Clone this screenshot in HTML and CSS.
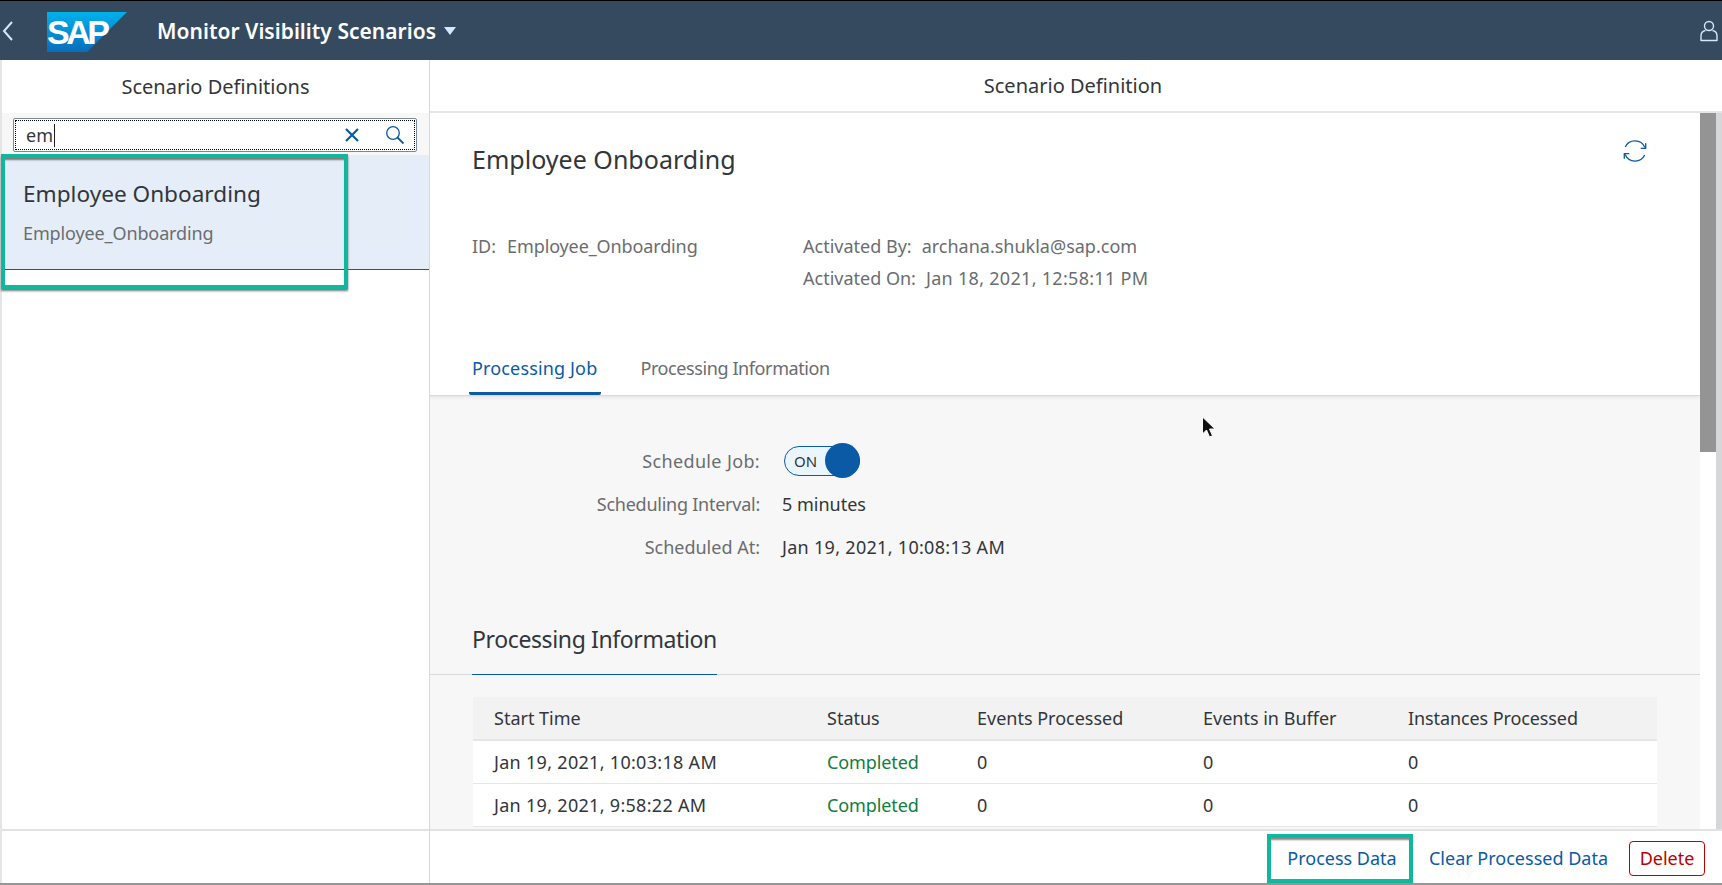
FILE: index.html
```
<!DOCTYPE html>
<html lang="en">
<head>
<meta charset="utf-8">
<title>Monitor Visibility Scenarios</title>
<link rel="stylesheet" href="styles.css">
</head>
<body>
<div class="app">
  <header class="shell">
    <svg class="back" viewBox="0 0 12 22" width="12" height="22"><path d="M10 2 2 11l8 9" fill="none" stroke="#d1e8ff" stroke-width="2"/></svg>
    <div class="logo">
      <svg viewBox="0 0 80 40" width="80" height="40">
        <defs><linearGradient id="sapg" x1="0" y1="0" x2="0" y2="1"><stop offset="0" stop-color="#00b1eb"/><stop offset="1" stop-color="#0a6cbd"/></linearGradient></defs>
        <polygon points="0,0 80,0 40,40 0,40" fill="url(#sapg)"/>
        <text x="0" y="32" class="logo-text">SAP</text>
      </svg>
    </div>
    <div class="app-title">Monitor Visibility Scenarios</div>
    <svg class="caret" viewBox="0 0 12 8" width="12" height="8"><polygon points="0,0 12,0 6,8" fill="#d1e8ff"/></svg>
    <svg class="user" viewBox="0 0 18 22" width="18" height="22"><circle cx="9" cy="6" r="4.5" fill="none" stroke="#d1e8ff" stroke-width="1.4"/><path d="M1 21v-5c0-3 2-5 4.500-5.500M17 21v-5c0-3-2-5-4.500-5.500M1 20.500h16" fill="none" stroke="#d1e8ff" stroke-width="1.400"/></svg>
  </header>
  <div class="main">
    <aside class="master">
      <div class="bar-title">Scenario Definitions</div>
      <div class="search-band">
        <div class="search">
          <span class="search-text">em</span><span class="text-cursor"></span>
          <svg class="x-icon" viewBox="0 0 16 16" width="16" height="16"><path d="M2 2l12 12M14 2 2 14" stroke="#0a5aa5" stroke-width="2.200" fill="none"/></svg>
          <svg class="search-icon" viewBox="0 0 20 20" width="20" height="20"><circle cx="8" cy="8" r="6.300" fill="none" stroke="#0a5aa5" stroke-width="1.300"/><path d="M12.500 12.500 18.500 18.500" stroke="#0a5aa5" stroke-width="1.800"/></svg>
        </div>
      </div>
      <div class="list">
        <div class="list-item">
          <div class="item-title">Employee Onboarding</div>
          <div class="item-sub">Employee_Onboarding</div>
        </div>
        <div class="highlight-item"></div>
      </div>
      <div class="master-footer"></div>
    </aside>
    <section class="detail">
      <div class="bar-title detail-title">Scenario Definition</div>
      <div class="scroll-wrap">
        <div class="scroll-content">
          <div class="object-head">
            <div class="head-row">
              <h1 class="object-title">Employee Onboarding</h1>
              <svg class="refresh" viewBox="0 0 24 24" width="24" height="24"><path d="M2.300 8A10.700 10.700 0 0 1 21.800 8.500M21.700 16A10.700 10.700 0 0 1 2.200 15.500" fill="none" stroke="#0a5aa5" stroke-width="1.300"/><path d="M22.700 4.300v5h-5M1.300 19.700v-5h5" fill="none" stroke="#0a5aa5" stroke-width="1.300"/></svg>
            </div>
            <div class="attrs">
              <div class="attr-col id-col"><span class="lbl lbl-id">ID:</span><span class="val val-id">Employee_Onboarding</span></div>
              <div class="attr-col">
                <div class="attr-line"><span class="lbl">Activated By:</span><span class="val">archana.shukla@sap.com</span></div>
                <div class="attr-line"><span class="lbl">Activated On:</span><span class="val date">Jan 18, 2021, 12:58:11 PM</span></div>
              </div>
            </div>
            <div class="tabs">
              <div class="tab active">Processing Job</div>
              <div class="tab tab-long">Processing Information</div>
            </div>
          </div>
          <div class="section-body">
            <div class="form">
              <div class="form-label lbl-job">Schedule Job:</div>
              <div class="form-value"><span class="switch"><span class="switch-text">ON</span><span class="knob"></span></span></div>
              <div class="form-label lbl-interval">Scheduling Interval:</div>
              <div class="form-value">5 minutes</div>
              <div class="form-label">Scheduled At:</div>
              <div class="form-value date">Jan 19, 2021, 10:08:13 AM</div>
            </div>
            <div class="section-head"><h2 class="section-title">Processing Information</h2></div>
            <div class="grid">
              <div class="grid-row grid-header"><span>Start Time</span><span>Status</span><span>Events Processed</span><span>Events in Buffer</span><span class="col-inst">Instances Processed</span></div>
              <div class="grid-row"><span class="date">Jan 19, 2021, 10:03:18 AM</span><span class="ok">Completed</span><span>0</span><span>0</span><span>0</span></div>
              <div class="grid-row"><span class="date">Jan 19, 2021, 9:58:22 AM</span><span class="ok">Completed</span><span>0</span><span>0</span><span>0</span></div>
            </div>
          </div>
        </div>
        <div class="scrollbar"><div class="thumb"></div></div>
        <svg class="pointer" viewBox="0 0 16 24" width="16" height="24"><path d="M1.500 1v17l4-4 3 7 3-1.300-3-6.700h5.500z" fill="#111" stroke="#fff" stroke-width="1"/></svg>
      </div>
      <div class="detail-footer">
        <button class="btn btn-highlight">Process Data</button>
        <button class="btn">Clear Processed Data</button>
        <button class="btn btn-delete">Delete</button>
      </div>
    </section>
  </div>
</div>
</body>
</html>
```
FILE: styles.css
```
* { box-sizing: border-box; }
html, body { margin: 0; height: 100%; overflow: hidden; }
body { background: #fff; font-family: "Noto Sans", "Open Sans", sans-serif; color: #32363a; }
.app { width: 1722px; height: 885px; display: flex; flex-direction: column; border-top: 1px solid #000; border-bottom: 2px solid #969696; }
.shell { height: 59px; background: #354a5f; display: flex; align-items: center; flex: none; }
.back { margin-left: 2px; }
.logo { margin-left: 33px; height: 40px; margin-top: 2px; }
.logo-text { font-family: "Liberation Sans", sans-serif; font-weight: 700; font-size: 34px; fill: #fff; letter-spacing: -3.500px; }
.app-title { margin-left: 30px; color: #fff; font-size: 21px; font-weight: 600; letter-spacing: .03px; }
.caret { margin-left: 8px; }
.user { margin-left: auto; margin-right: 4px; }
.main { flex: 1; display: flex; min-height: 0; }
.master { width: 430px; flex: none; border-left: 2px solid #e5e5e5; border-right: 1px solid #d9d9d9; display: flex; flex-direction: column; }
.bar-title { height: 53px; display: flex; align-items: center; justify-content: center; font-size: 20px; flex: none; }
.search-band { height: 42px; background: #f7f7f7; padding: 5px 12px 0 11px; flex: none; }
.search { height: 34px; background: #fff; border: 1px solid #7b8a99; border-radius: 2px; display: flex; align-items: center; padding: 0 11px 0 12px; position: relative; }
.search::after { content: ""; position: absolute; inset: 1px; border: 1px dotted #000; pointer-events: none; }
.search-text { font-size: 18px; }
.text-cursor { width: 1px; height: 23px; background: #222; margin-left: 1px; }
.x-icon { margin-left: auto; }
.search-icon { margin-left: 25px; }
.list { flex: 1; position: relative; }
.list-item { height: 115px; background: #e5eef8; border-bottom: 1px solid #0a5aa5; padding: 22px 21px; }
.item-title { font-size: 22.600px; line-height: 33px; }
.item-sub { font-size: 18px; letter-spacing: -.12px; line-height: 24px; margin-top: 11px; color: #6a6d70; }
.highlight-item { position: absolute; left: -1px; top: -1px; width: 347px; height: 135px; border: 4px solid #0fb89d; box-shadow: inset 0 3px 2px -1px #777, 0 2px 2px #777; }
.master-footer { height: 54px; border-top: 2px solid #e2e2e2; flex: none; }
.detail { flex: 1; min-width: 0; display: flex; flex-direction: column; }
.detail-title { border-bottom: 2px solid #e5e5e5; padding-right: 6px; }
.scroll-wrap { flex: 1; min-height: 0; display: flex; position: relative; }
.scroll-content { flex: 1; min-width: 0; overflow: hidden; background: #f7f7f7; }
.object-head { background: #fff; height: 283px; padding: 0 42px; border-bottom: 1px solid #d9d9d9; box-shadow: 0 1px 4px rgba(0,0,0,.1); position: relative; }
.head-row { display: flex; justify-content: space-between; align-items: center; height: 92px; padding-right: 11px; }
.object-title { margin: 0; font-size: 25px; font-weight: 400; letter-spacing: .02px; }
.refresh { margin-bottom: 16px; }
.attrs { display: flex; margin-top: 25px; color: #6a6d70; font-size: 18px; line-height: 32px; }
.id-col { width: 331px; }
.lbl { margin-right: 10px; }
.lbl-id { margin-right: 11px; }
.val-id { letter-spacing: -.12px; }
.date { letter-spacing: .3px; }
.tabs { display: flex; margin-top: 59px; margin-left: -3px; gap: 35px; }
.tab { font-size: 18px; padding: 0 4px 0 3px; height: 42px; line-height: 30px; color: #6a6d70; }
.tab-long { letter-spacing: -.4px; padding-left: 4px; }
.tab.active { color: #0a5aa5; letter-spacing: .15px; border-bottom: 3px solid #0a5aa5; border-radius: 0 0 2px 2px; }
.section-body { padding-top: 48px; }
.form { display: grid; grid-template-columns: 330px 1fr; column-gap: 22px; font-size: 18px; }
.form-label { text-align: right; color: #6a6d70; height: 43px; line-height: 34px; }
.lbl-job { letter-spacing: .35px; }
.lbl-interval { letter-spacing: -.25px; }
.form-value { height: 43px; line-height: 34px; }
.switch { display: inline-flex; align-items: center; position: relative; width: 76px; height: 30px; border: 1px solid #0a5aa5; border-radius: 15px; background: #ebf5fe; padding-left: 9px; font-size: 15px; margin: 2px 0 0 2px; vertical-align: top; }
.knob { position: absolute; right: -1px; top: -4px; width: 35px; height: 35px; background: #0a5aa5; border-radius: 50%; }
.section-head { margin-top: 41px; border-bottom: 1px solid #d9d9d9; height: 61px; padding-left: 42px; }
.section-title { margin: 0; display: inline-block; height: 61px; font-size: 23px; letter-spacing: -.38px; font-weight: 400; line-height: 50px; border-bottom: 1px solid #0a5aa5; }
.grid { margin: 22px 0 0 43px; width: 1184px; font-size: 18px; }
.grid-row { display: grid; grid-template-columns: 333px 150px 226px 205px 1fr; padding-left: 21px; height: 43px; align-items: center; background: #fff; border-bottom: 1px solid #e5e5e5; }
.grid-header { background: #f2f2f2; height: 44px; border-bottom: 2px solid #e5e5e5; }
.col-inst { letter-spacing: -.1px; }
.ok { color: #107e3e; letter-spacing: -.1px; }
.scrollbar { width: 22px; flex: none; background: #fff; border-right: 6px solid #d5d8d8; }
.thumb { height: 339px; background: #949494; }
.pointer { position: absolute; left: 771px; top: 303px; }
.detail-footer { height: 54px; flex: none; border-top: 2px solid #e2e2e2; display: flex; align-items: center; justify-content: flex-end; padding: 2px 17px 0 0; gap: 9px; }
.btn { font-family: inherit; font-size: 18px; background: none; border: 1px solid transparent; color: #0a5aa5; height: 35px; padding: 0 11px; border-radius: 4px; }
.btn-highlight { border: 4px solid #0fb89d; height: 49px; width: 146px; border-radius: 0; padding: 0 0 0 4px; margin-right: -5px; box-shadow: inset 0 3px 2px -1px #888; }
.btn-delete { color: #bb0000; border-color: #bb0000; width: 76px; padding: 0; }
```
